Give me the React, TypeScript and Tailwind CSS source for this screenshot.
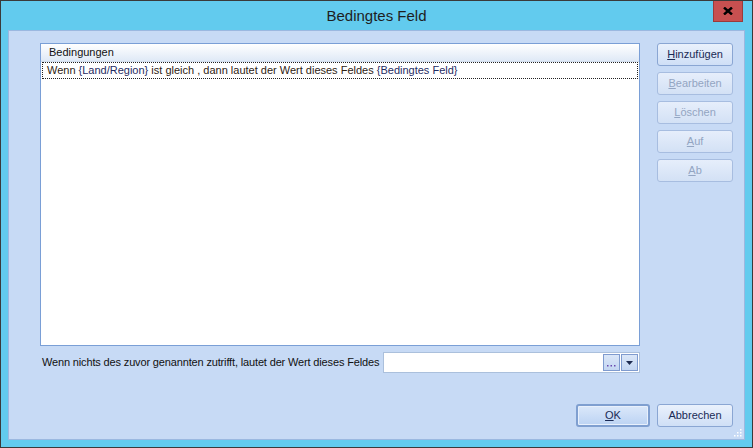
import React from "react";

const font = { fontFamily: '"Liberation Sans", Arial, sans-serif' };

function Btn({ u, rest, disabled, def }: { u: string; rest: string; disabled?: boolean; def?: boolean }) {
  return (
    <div
      className={
        "flex items-center justify-center rounded-[3px] h-[23px] text-[11px] " +
        (def
          ? "border-2 border-[#7f9fd0] bg-gradient-to-b from-[#dbe8fa] to-[#bcd3f3] text-[#1a2a55] shadow-[inset_0_0_0_1px_#e8f0fc]"
          : disabled
          ? "border border-[#a7bde0] bg-gradient-to-b from-[#e6eefb] to-[#d3e1f5] text-[#93a5c2]"
          : "border border-[#8aa6d3] bg-gradient-to-b from-[#eaf1fc] to-[#cfdff6] text-[#1a2a55]")
      }
    >
      <span>
        <span className="underline underline-offset-[1px]">{u}</span>
        {rest}
      </span>
    </div>
  );
}

export default function App() {
  return (
    <div style={font} className="w-[753px] h-[448px] bg-[#62cbee] border border-[#3a3a3a] flex flex-col relative">
      <div className="h-[29px] flex items-center justify-center text-[15px] text-[#1e1e1e] pt-[1px]">
        Bedingtes Feld
      </div>
      <div className="absolute top-0 right-[9px] w-[30px] h-[21px] bg-[#c75050] border border-[#9b3a3a] border-t-0 flex items-center justify-center">
        <svg width="10" height="8" viewBox="0 0 10 8">
          <path d="M1 0.5 L9 7.5 M9 0.5 L1 7.5" stroke="#000" strokeWidth="2.4" />
        </svg>
      </div>
      <div className="flex-1 mx-[7px] mb-[7px] bg-[#c7daf5] border border-[#9bb8e0] flex flex-col pt-[12px] pl-[31px] pr-[11px] pb-[12px] relative">
        <div className="flex gap-[17px]">
          <div className="w-[601px] flex flex-col">
            <div className="h-[303px] bg-white border border-[#7a9fd6] flex flex-col">
              <div className="h-[18px] bg-gradient-to-b from-[#ffffff] to-[#dfe9f6] border-b border-[#d0dcec] flex items-center pl-[8px] text-[11px] text-[#111]">
                Bedingungen
              </div>
              <div className="h-[17px] mx-[1px] border border-dotted border-[#222] flex items-center pl-[4px] text-[11px] text-[#2e2212] whitespace-nowrap">
                Wenn <span className="text-[#1f2b62] ml-[3px]">{"{Land/Region}"}</span>&nbsp;ist gleich , dann lautet der Wert dieses Feldes&nbsp;
                <span className="text-[#1f2b62]">{"{Bedingtes Feld}"}</span>
              </div>
            </div>
            <div className="mt-[6px] h-[21px] flex items-center">
              <div className="text-[11px] tracking-[-0.15px] text-[#111] pl-[2px] flex-1 whitespace-nowrap">
                Wenn nichts des zuvor genannten zutrifft, lautet der Wert dieses Feldes
              </div>
              <div className="w-[257px] h-[21px] bg-white border border-[#abc0dc] flex items-center justify-end pr-[1px] gap-[1px]">
                <div className="w-[17px] h-[17px] border border-[#7f9bcf] bg-gradient-to-b from-[#dbe7f8] to-[#c3d6f2] flex items-end justify-center pb-[3px]">
                  <svg width="9" height="2" viewBox="0 0 9 2">
                    <rect x="0" y="0" width="1.5" height="1.5" fill="#6a4ab0" />
                    <rect x="3.5" y="0" width="1.5" height="1.5" fill="#6a4ab0" />
                    <rect x="7" y="0" width="1.5" height="1.5" fill="#6a4ab0" />
                  </svg>
                </div>
                <div className="w-[17px] h-[17px] border border-[#7f9bcf] bg-gradient-to-b from-[#dbe7f8] to-[#c3d6f2] flex items-center justify-center">
                  <svg width="7" height="4" viewBox="0 0 7 4">
                    <path d="M0 0 H7 L3.5 4 Z" fill="#1d2b50" />
                  </svg>
                </div>
              </div>
            </div>
          </div>
          <div className="w-[76px] flex flex-col gap-[6px]">
            <Btn u="H" rest="inzufügen" />
            <Btn u="B" rest="earbeiten" disabled />
            <Btn u="L" rest="öschen" disabled />
            <Btn u="A" rest="uf" disabled />
            <Btn u="A" rest="b" disabled />
          </div>
        </div>
        <div className="flex-1" />
        <div className="flex justify-end gap-[7px]">
          <div className="w-[74px]">
            <Btn u="O" rest="K" def />
          </div>
          <div className="w-[76px]">
            <Btn u="" rest="Abbrechen" />
          </div>
        </div>
        <div className="absolute right-[2px] bottom-[2px]">
          <svg width="8" height="8" viewBox="0 0 8 8">
            <rect x="6" y="0" width="1.5" height="1.5" fill="#fff" />
            <rect x="3" y="3" width="1.5" height="1.5" fill="#fff" />
            <rect x="6" y="3" width="1.5" height="1.5" fill="#fff" />
            <rect x="0" y="6" width="1.5" height="1.5" fill="#fff" />
            <rect x="3" y="6" width="1.5" height="1.5" fill="#fff" />
            <rect x="6" y="6" width="1.5" height="1.5" fill="#fff" />
          </svg>
        </div>
      </div>
    </div>
  );
}
